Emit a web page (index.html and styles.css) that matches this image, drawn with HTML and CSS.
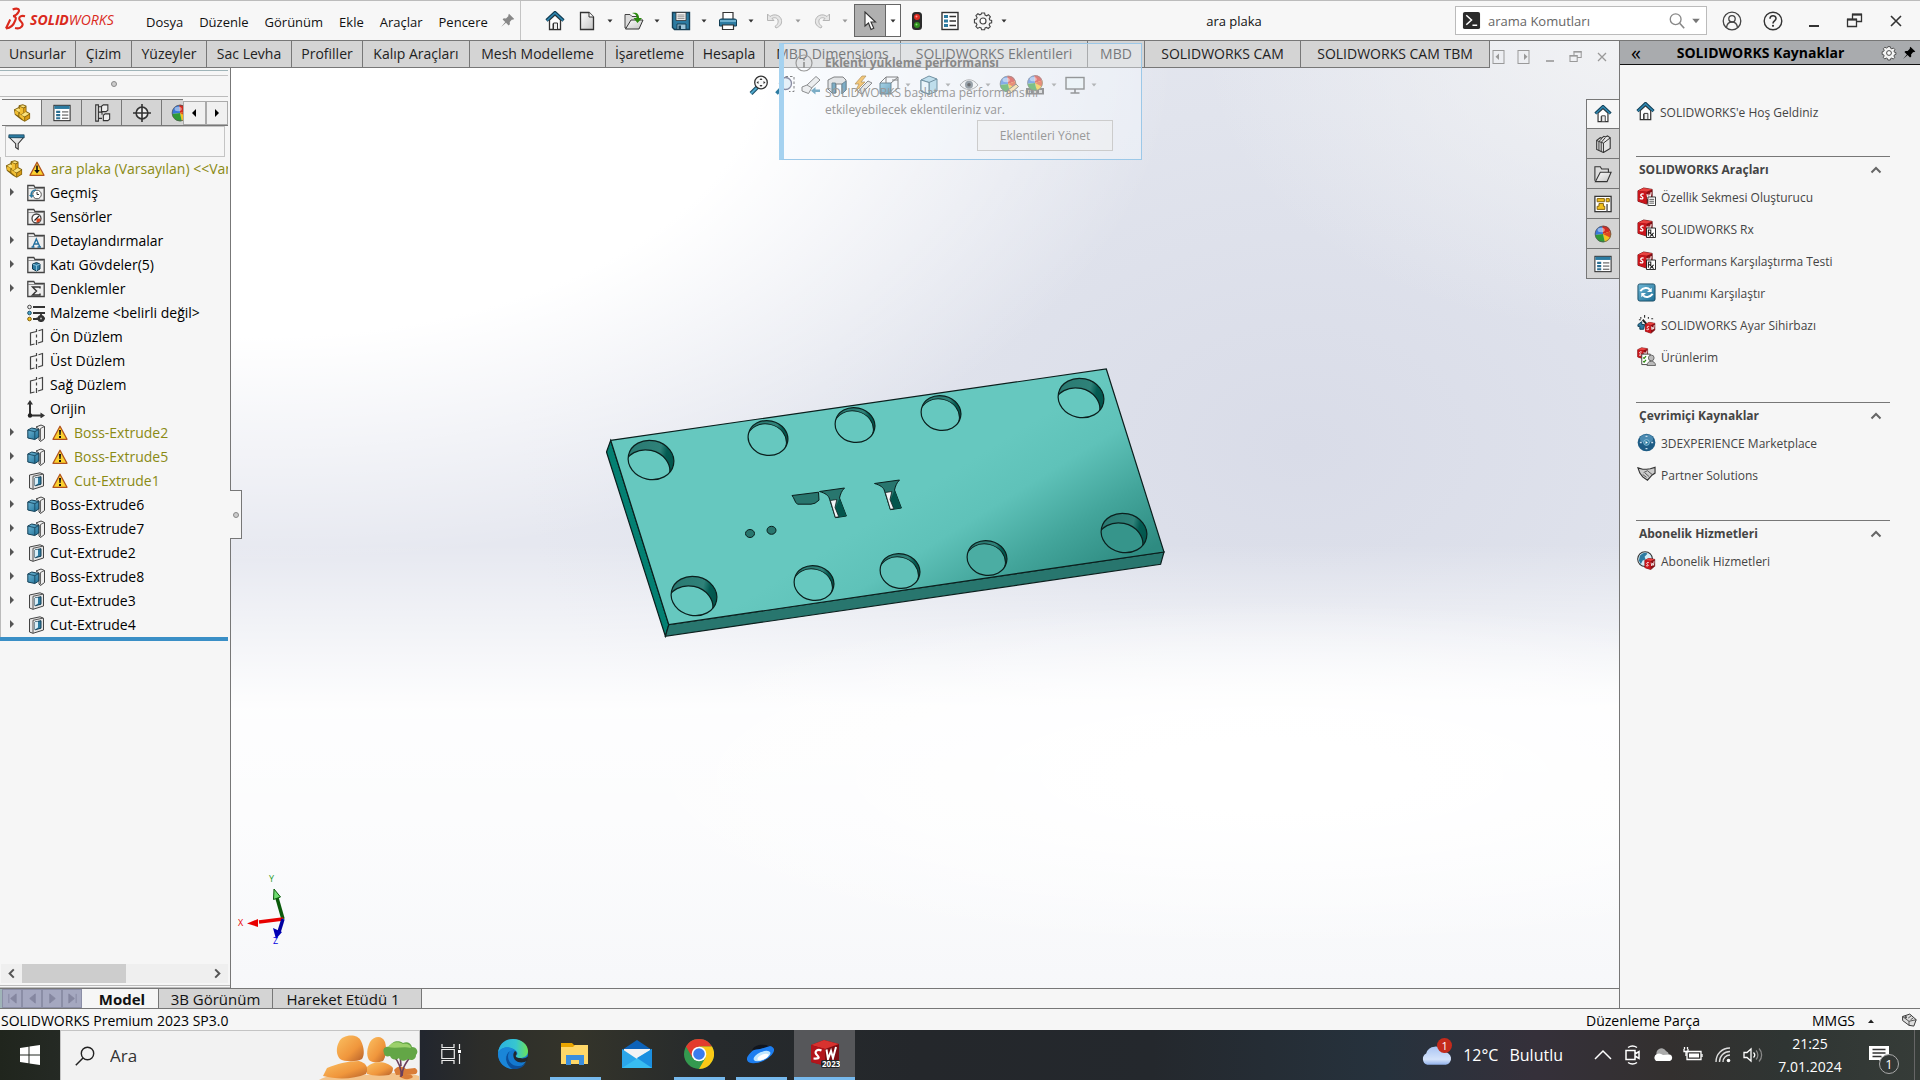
FILE: index.html
```html
<!DOCTYPE html>
<html lang="tr">
<head>
<meta charset="utf-8">
<title>ara plaka - SOLIDWORKS</title>
<link rel="stylesheet" href="styles.css">
</head>
<body>
<svg class="sprite" aria-hidden="true">
  <defs>
    <linearGradient id="gBlue" x1="0" y1="0" x2="1" y2="1"><stop offset="0" stop-color="#6fb7d6"/><stop offset="1" stop-color="#1d6f96"/></linearGradient>
    <linearGradient id="gGrey" x1="0" y1="0" x2="1" y2="1"><stop offset="0" stop-color="#fff"/><stop offset="1" stop-color="#c4c4c4"/></linearGradient>
    <linearGradient id="gFace" gradientUnits="userSpaceOnUse" x1="400" y1="70" x2="490" y2="215"><stop offset="0" stop-color="#66c8bf"/><stop offset=".3" stop-color="#5fc2b9"/><stop offset=".65" stop-color="#43a59b"/><stop offset="1" stop-color="#2e8b81"/></linearGradient>
    <linearGradient id="gHole" x1="0" y1="0" x2="1" y2="0"><stop offset="0" stop-color="#2a7a72"/><stop offset=".65" stop-color="#2f8279"/><stop offset=".8" stop-color="#045c53"/><stop offset="1" stop-color="#03554c"/></linearGradient>
    <linearGradient id="gRock" x1="0" y1="0" x2="1" y2="1"><stop offset="0" stop-color="#fbc062"/><stop offset=".6" stop-color="#f0963c"/><stop offset="1" stop-color="#b5602a"/></linearGradient>
    <linearGradient id="gEdge" x1="0" y1="0" x2="1" y2="0"><stop offset="0" stop-color="#2bb1e0"/><stop offset=".6" stop-color="#37c6d0"/><stop offset="1" stop-color="#6be358"/></linearGradient>
    <linearGradient id="gCloud" x1="0" y1="0" x2="0" y2="1"><stop offset="0" stop-color="#a9c4f3"/><stop offset=".7" stop-color="#d5e3fb"/><stop offset="1" stop-color="#8fb0ea"/></linearGradient>
  </defs>
  <symbol id="i-home" viewBox="0 0 20 20"><path d="M4.500 9v9.500h11V9L10 4z" fill="#fff" stroke="#333" stroke-width="1.300"/><path d="M8.500 18v-6h4v6M8 18v-5.500" fill="#eee" stroke="#333"/><path d="M1.500 9.500L10 1.500l8.500 8" fill="none" stroke="#123e55" stroke-width="3.200"/><path d="M2 9.500L10 2l8 7.500" fill="none" stroke="#2f87b0" stroke-width="1.600"/></symbol>
  <symbol id="i-new" viewBox="0 0 20 20"><path d="M3.500 1.500H12L16.500 6v12.500h-13z" fill="url(#gGrey)" stroke="#333" stroke-width="1.300"/><path d="M12 1.500V6h4.500" fill="#fff" stroke="#333"/></symbol>
  <symbol id="i-open" viewBox="0 0 20 20"><path d="M1 17V3.500h5l2 2h6V17z" fill="#ddd" stroke="#444"/><path d="M1.500 18L7 9h12l-4 9z" fill="url(#gGrey)" stroke="#333"/><path d="M8 2c5-1 7 1 7 5h3l-4.500 5L9.500 7h3c0-3-1-4-4.500-5z" fill="#2b8a0e"/></symbol>
  <symbol id="i-save" viewBox="0 0 20 20"><path d="M1.500 1.500h17v17h-15l-2-2z" fill="#2c7ba1" stroke="#173f55" stroke-width="1.400"/><path d="M5 1.500h10v8H5z" fill="#f4f4f4" stroke="#333" stroke-width=".8"/><path d="M6.500 4h7M6.500 5.800h7M6.500 7.600h7" stroke="#777" stroke-width=".8"/><path d="M6 13h9v5.500H6z" fill="#9cc4d8" stroke="#173f55"/><path d="M7.500 14.500h2.500v4H7.500z" fill="#173f55"/></symbol>
  <symbol id="i-print" viewBox="0 0 20 20"><path d="M5 1.500h10V9H5z" fill="#fff" stroke="#333" stroke-width="1.200"/><path d="M1.500 9l1-1h15l1 1v6h-17z" fill="#2c7ba1" stroke="#123e55"/><path d="M2 10h16" stroke="#8cc6e0" stroke-width="1.400"/><path d="M4.500 14h11v4.500h-11z" fill="#fff" stroke="#333" stroke-width="1.200"/></symbol>
  <symbol id="i-undo" viewBox="0 0 20 20"><path d="M2.500 3v6.500h6.500L7 7.500c3-2 7 0 6 4-.3 1.500-1.500 3-3 4l1 1.500c4-1.500 6-4 5.500-7.500C16 4.500 9.500 2 5 5.500z" fill="#e6e6e6" stroke="#b5b5b5"/></symbol>
  <symbol id="i-redo" viewBox="0 0 20 20"><path d="M17.500 3v6.500H11l2-2c-3-2-7 0-6 4 .3 1.500 1.500 3 3 4l-1 1.500c-4-1.500-6-4-5.500-7.500C4 4.500 10.500 2 15 5.500z" fill="#e6e6e6" stroke="#b5b5b5"/></symbol>
  <symbol id="i-cursor" viewBox="0 0 20 20"><path d="M5 1v14l3.500-3 2.500 6.500 2.800-1.200L11 11h4.500z" fill="#fff" stroke="#333" stroke-width="1.100"/></symbol>
  <symbol id="i-traffic" viewBox="0 0 20 20"><rect x="5" y="1" width="10" height="18" rx="3.500" fill="#2b2b2b"/><circle cx="10" cy="6" r="3" fill="#e02b20"/><circle cx="10" cy="14" r="3" fill="#2f8f1d"/><circle cx="9.500" cy="5.400" r="1" fill="#ff9a90"/><circle cx="9.500" cy="13.400" r="1" fill="#8fdc7c"/></symbol>
  <symbol id="i-list" viewBox="0 0 20 20"><rect x="2" y="1.500" width="16" height="17" fill="#fff" stroke="#333" stroke-width="1.400"/><path d="M4 4h4v3H4zM4 8.500h4v3H4zM4 13h4v3H4z" fill="#2c7ba1"/><path d="M9.500 5.500H16M9.500 10H16M9.500 14.500H16" stroke="#333" stroke-width="1.300"/></symbol>
  <symbol id="i-gear" viewBox="0 0 20 20"><path d="M8.400 2h3.200l.5 2.200 1.700.8 2-1.200 2 2.200-1.200 2 .6 1.500 2 .5v2.400l-2 .6-.7 1.600 1.200 2-2.200 2-1.900-1.200-1.500.6-.5 2H8.400l-.6-2-1.600-.7-2 1.200-2-2.100 1.200-1.900-.7-1.600-2-.5V8.900l2.100-.6.700-1.500-1.200-2 2.100-2 2 1.100 1.400-.6z" fill="#f4f4f4" stroke="#444" stroke-width="1.200" transform="translate(.8 .2) scale(.93)"/><circle cx="10" cy="10" r="3" fill="#fff" stroke="#444" stroke-width="1.200"/></symbol>
  <symbol id="i-pin" viewBox="0 0 20 20"><path d="M12 1l7 7-2 1-1-.3-3 3.300.2 3-1.700 1.500L8 13l-6.500 5.500L7 12 3.500 8.500 5 7l3 .2L11.300 4 11 3z" fill="currentColor"/></symbol>
  <symbol id="i-search" viewBox="0 0 20 20"><circle cx="8.500" cy="8" r="6" fill="none" stroke="currentColor" stroke-width="1.500"/><path d="M13 12.500l5 5.500" stroke="currentColor" stroke-width="1.800"/></symbol>
  <symbol id="i-prompt" viewBox="0 0 20 20"><rect x="1" y="1" width="18" height="18" rx="2" fill="#2b2b2b"/><path d="M4.500 4.500L10 9.500l-5.500 5M11 15h5" fill="none" stroke="#fff" stroke-width="1.600"/></symbol>
  <symbol id="i-user" viewBox="0 0 20 20"><circle cx="10" cy="10" r="8.800" fill="none" stroke="#444" stroke-width="1.300"/><circle cx="10" cy="7.800" r="3.200" fill="none" stroke="#444" stroke-width="1.300"/><path d="M4.500 16.500c.5-4 2.500-5.500 5.500-5.500s5 1.500 5.500 5.500" fill="none" stroke="#444" stroke-width="1.300"/></symbol>
  <symbol id="i-help" viewBox="0 0 20 20"><circle cx="10" cy="10" r="8.800" fill="none" stroke="#333" stroke-width="1.400"/><path d="M7 7.800c0-4 6-4 6-.3 0 2.300-3 2.500-3 5" fill="none" stroke="#333" stroke-width="1.600"/><circle cx="10" cy="14.800" r="1.100" fill="#333"/></symbol>
  <symbol id="i-min" viewBox="0 0 20 20"><path d="M5 15h10" stroke="currentColor" stroke-width="2"/></symbol>
  <symbol id="i-restore" viewBox="0 0 20 20"><path d="M2.500 8.500h9v7h-9zM7.500 8V3.500h9v7H12" fill="none" stroke="currentColor" stroke-width="1.300"/><path d="M2 8.500h10M7 3.500h10" stroke="currentColor" stroke-width="2"/></symbol>
  <symbol id="i-close" viewBox="0 0 20 20"><path d="M5 5l10 10M15 5L5 15" stroke="currentColor" stroke-width="1.600"/></symbol>
  <symbol id="i-paneL" viewBox="0 0 16 16"><rect x="3" y="1.500" width="11" height="13" fill="none" stroke="currentColor"/><path d="M9 4.500v6.500L5.500 7.800z" fill="currentColor"/></symbol>
  <symbol id="i-paneR" viewBox="0 0 16 16"><rect x="2" y="1.500" width="11" height="13" fill="none" stroke="currentColor"/><path d="M8 4.500v6.500l3.500-3.200z" fill="currentColor"/></symbol>
  <symbol id="i-part" viewBox="0 0 20 20"><path d="M1 6l5-2.500.500-2L11 .3 15 2v6l4 2.200V16l-6 3.700-4-2.200-7-5.500z" fill="#80600c"/><path d="M2 7l4 2v4L2.500 11z" fill="#f2bf33"/><path d="M2.500 6.500L6 4.800l2 1V9L6 8.500z" fill="#fbe27c"/><path d="M7.500 3l4 1.600V10L9 11.500l-1.500-1z" fill="#f2bf33"/><path d="M7.500 2.300L11 1.300l3 1.200-2.500 1.300z" fill="#fbe27c"/><path d="M12 4.600l2.200-1.100v5L12 10z" fill="#d99b16"/><path d="M9 12.200L14 9l4 1.800-5 3.200z" fill="#fbe27c"/><path d="M7 10.500l5.500 4.200v3.800L7 14z" fill="#f2bf33"/><path d="M13.500 14.800l4.700-3v3.700l-4.700 3z" fill="#d99b16"/></symbol>
  <symbol id="i-props" viewBox="0 0 20 20"><rect x="1" y="1.500" width="18" height="17" fill="#fff" stroke="#333" stroke-width="1.200"/><path d="M1.500 2h17v3.500h-17z" fill="#2c7ba1"/><path d="M3.500 7.500H8V10H3.500zM3.500 11.200H8v2.300H3.500zM3.500 14.700H8V17H3.500z" fill="#2c6f92"/><path d="M10 8.800h7M10 12.300h7M10 15.800h7" stroke="#333"/></symbol>
  <symbol id="i-config" viewBox="0 0 20 20"><path d="M3 1h3v18H3zM6 3h4M6 9h4v3M6 16h4" fill="#ddd" stroke="#333" stroke-width="1.200"/><path d="M9.500 2.500l2-1.500h5v6l-2 1.500h-5zM11.500 12.500l2-1.500h5v6l-2 1.500h-5z" fill="#eee" stroke="#333" stroke-width="1.200"/></symbol>
  <symbol id="i-target" viewBox="0 0 20 20"><circle cx="10" cy="10" r="6.500" fill="#eee" stroke="#333" stroke-width="1.800"/><path d="M10 0v20M0 10h20" stroke="#333" stroke-width="1.800"/></symbol>
  <symbol id="i-ball" viewBox="0 0 20 20"><path d="M10 10L9 1a9 9 0 0 1 9.500 6z" fill="#d32a20"/><path d="M10 10l8.500-3A9 9 0 0 1 12 18.900z" fill="#f3c11d"/><path d="M9 1.100A9 9 0 0 0 1.100 11L10 10z" fill="#3a78d8"/><path d="M1.100 11A9 9 0 0 0 12 18.900L10 10z" fill="#2f9a36"/><path d="M10 10l8.500-3 .3 3-1 4z" fill="#e04822"/><circle cx="10" cy="10" r="8.800" fill="none" stroke="#555" stroke-width=".8"/><ellipse cx="8" cy="5.500" rx="4" ry="2.500" fill="#fff" opacity=".45"/></symbol>
  <symbol id="i-filter" viewBox="0 0 20 20"><path d="M1.500 4.500h17L12 12v6.500l-3-2V12z" fill="url(#gGrey)" stroke="#333" stroke-width="1.200"/><path d="M1 1.500h18V5H1z" fill="#2c7ba1" stroke="#123e55" stroke-width=".8"/></symbol>
  <symbol id="i-warn" viewBox="0 0 16 16"><path d="M8 1.200L15 14.300H1z" fill="#fbd22f" stroke="#b0521d" stroke-width="1.300" stroke-linejoin="round"/><path d="M7 5h2l-.4 5H7.400zM7 11h2v2H7z" fill="#111"/></symbol>
  <symbol id="i-warnd" viewBox="0 0 16 16"><path d="M8 1.200L15 14.300H1z" fill="#fbd22f" stroke="#b0521d" stroke-width="1.300" stroke-linejoin="round"/><path d="M7.200 4.500h1.600v4.500h2L8 12.500 5.200 9h2z" fill="#111"/></symbol>
  <symbol id="i-folder" viewBox="0 0 18 18"><path d="M.8 16.500V1.500h6l1.200 2h9.200v13z" fill="#eee" stroke="#444" stroke-width="1.300"/><path d="M1 4.500h16" stroke="#777" stroke-width=".8"/></symbol>
  <symbol id="i-history" viewBox="0 0 18 18"><use href="#i-folder"/><circle cx="10" cy="10.500" r="4.300" fill="#fff" stroke="#555"/><path d="M10 8v2.500h2" fill="none" stroke="#333"/><path d="M4 12c0-4 2-6 5-6" fill="none" stroke="#2c7ba1" stroke-width="1.600"/><path d="M2 11h5l-2.500 3z" fill="#2c7ba1"/></symbol>
  <symbol id="i-sensor" viewBox="0 0 18 18"><use href="#i-folder"/><circle cx="9.500" cy="10.500" r="4.500" fill="#fff" stroke="#444" stroke-width="1.300"/><path d="M9.500 10.500h4a4 4 0 0 1-4 4z" fill="#e0441c"/><path d="M7.500 12.500L12 8" stroke="#222" stroke-width="1.300"/></symbol>
  <symbol id="i-annot" viewBox="0 0 18 18"><use href="#i-folder"/><path d="M4.500 15h3M10.500 15h3.500M6 14.500L9.300 7l3.400 7.500M7 12h4.500" fill="none" stroke="#2471a0" stroke-width="1.400"/></symbol>
  <symbol id="i-bodies" viewBox="0 0 18 18"><use href="#i-folder"/><path d="M5.500 8l4-1.500L13 8v5l-3.500 2-4-2z" fill="#2c7ba1" stroke="#103a50"/><path d="M9.500 9.500V15M5.500 8l4 1.500L13 8" fill="none" stroke="#9fd2ea" stroke-width=".8"/></symbol>
  <symbol id="i-sigma" viewBox="0 0 18 18"><use href="#i-folder"/><path d="M13 8.500V7H5.500L9.500 11l-4 4H13v-1.500" fill="none" stroke="#333" stroke-width="1.400"/></symbol>
  <symbol id="i-material" viewBox="0 0 18 18"><circle cx="2.500" cy="3" r="1.800" fill="#eee" stroke="#444"/><circle cx="2.500" cy="9" r="1.800" fill="#4fa8cc" stroke="#1b4d66"/><circle cx="2.500" cy="15" r="1.800" fill="#f3c11d" stroke="#805f0a"/><path d="M6 3h12M6 9h12M6 15h5" stroke="#333" stroke-width="1.800"/><circle cx="14" cy="14.500" r="3.500" fill="#333"/><path d="M14 10v9M9.500 14.500h9" stroke="#333" stroke-width="1.800"/><circle cx="14" cy="14.500" r="1" fill="#bbb"/></symbol>
  <symbol id="i-plane" viewBox="0 0 18 18"><path d="M9.500 3.500L3.500 5v12l4-1M11.500 2.700l4-1.200v12L11 15" fill="none" stroke="#444" stroke-width="1.200"/><path d="M9.500 1v3M9.500 6.500v3M9.500 12v5" stroke="#444" stroke-width="1.200"/></symbol>
  <symbol id="i-origin" viewBox="0 0 18 18"><path d="M3 3v12.500h12" fill="none" stroke="#333" stroke-width="2"/><path d="M0 4.500L3 0l3 4.500zM13.500 12.500l4.500 3-4.500 3z" fill="#333"/><circle cx="3" cy="15.500" r="2.200" fill="#222"/></symbol>
  <symbol id="i-boss" viewBox="0 0 18 18"><path d="M9 3l5-2 3.500 1.500v12l-4 3L12 16V5z" fill="#eee" stroke="#444"/><path d="M13.500 4.500v12M13.500 4.500l4-2" stroke="#444" fill="none" stroke-width=".8"/><path d="M.8 6l4-2 7 1.500V13l-4 2.500-7-1.500z" fill="url(#gBlue)" stroke="#123e55"/><path d="M.8 6l7 1.700L11.800 5.500M7.800 7.700v7.500" fill="none" stroke="#123e55" stroke-width=".8"/></symbol>
  <symbol id="i-cut" viewBox="0 0 18 18"><path d="M2.500 3L13 .8l3.500 1.400V14L6 17.300 2.500 16z" fill="#e6e6e6" stroke="#444"/><path d="M6 4.300v13M6 4.300l10-2.200" fill="none" stroke="#555"/><path d="M8 6l6-1.300v7.500L8 13.800z" fill="#2c7ba1" stroke="#123e55"/><path d="M8 6l3-.6v6L8 13.500z" fill="#d9eef7"/></symbol>
  <symbol id="i-lib" viewBox="0 0 20 20"><path d="M3 6l4-3 1.500.6L11 1.500l1.500.6L15 1l3 2v12l-7.500 4.500L3 16z" fill="#e4e4e4" stroke="#333" stroke-width="1.200"/><path d="M3 6l2.500 1.200 3.500-3.500M5.500 7.200V17M8 8.200L12.500 3M8 8.200V18M10.500 9v10M10.500 9L18 3.200M5.500 7.200l5 1.800" fill="none" stroke="#333" stroke-width="1.100"/></symbol>
  <symbol id="i-dir" viewBox="0 0 20 20"><path d="M1 17.500V2h6l1.500 2.500H16v5" fill="#ddd" stroke="#333" stroke-width="1.200"/><path d="M1.500 18.500L7 8h12l-4.500 10.500z" fill="url(#gGrey)" stroke="#333" stroke-width="1.200"/></symbol>
  <symbol id="i-palette" viewBox="0 0 20 20"><rect x="1" y="1.500" width="18" height="17" fill="#fff" stroke="#333" stroke-width="1.400"/><path d="M3.500 4h8v3.500h-8zM13.500 4H17v3.500h-3.500zM5.500 9.500h5v3H12V16H3.500v-3.500h2z" fill="#f3c11d" stroke="#7d5a06"/><path d="M14.500 10v8" stroke="#777" stroke-width="2"/></symbol>
  <symbol id="i-zfit" viewBox="0 0 20 20"><path d="M8.500 12L2 18.500" stroke="#1b4d66" stroke-width="4"/><path d="M8.500 12L2 18.500" stroke="#4fa8cc" stroke-width="2"/><circle cx="12" cy="7.500" r="6.300" fill="#fafafa" stroke="#333" stroke-width="1.300"/><path d="M12 3l1.500 2h-3zM12 12l1.500-2h-3zM7.500 7.500l2-1.500v3zM16.500 7.500l-2-1.500v3z" fill="#333"/></symbol>
  <symbol id="i-zarea" viewBox="0 0 20 20"><path d="M5 5V1.500h14v15h-5" fill="none" stroke="#333" stroke-dasharray="2.500 2"/><path d="M6.500 13L1.500 18.500" stroke="#2c7ba1" stroke-width="3.500"/><circle cx="10.500" cy="8.500" r="6" fill="#dbeaf3" stroke="#446" stroke-width="1.300"/></symbol>
  <symbol id="i-prev" viewBox="0 0 20 20"><path d="M1 12l5-2 9-8.500L19 5l-8 7.500-3.500 6L1 16z" fill="#e6e6e6" stroke="#444"/><path d="M6 10l5 3" stroke="#555"/><path d="M19 14.500h-4.500V12L10 15.700l4.500 3.800V17H19z" fill="#2c7ba1"/></symbol>
  <symbol id="i-section" viewBox="0 0 20 20"><path d="M1 5l6-3h9l3 3v10l-4 4V9H9v9H5l-4-4z" fill="#d5d5d5" stroke="#333"/><path d="M5 8h3.500v10H5zM15 9l4-3v9l-4 4z" fill="#2c7ba1" stroke="#123e55"/></symbol>
  <symbol id="i-dyn" viewBox="0 0 20 20"><path d="M5 17l4-5 6-6 4 2-7 7-3 4z" fill="#ddd" stroke="#444"/><path d="M9 1L2 9h4l-4 8 10-10H8l5-6z" fill="#f3a51d" stroke="#8d5a06" stroke-width=".8"/></symbol>
  <symbol id="i-orient" viewBox="0 0 20 20"><path d="M1 8h11v11H1z" fill="url(#gBlue)" stroke="#123e55"/><path d="M1 8l6-6h12v11l-7 6M12 8l7-6M7 2v6M13 5h6" fill="none" stroke="#333"/></symbol>
  <symbol id="i-style" viewBox="0 0 20 20"><path d="M2 5l8-4 8 3v12l-8 3.500-8-3z" fill="#9ccbe0" stroke="#1b4d66"/><path d="M10 7.500V19M2 5l8 2.500L18 4" fill="none" stroke="#1b4d66"/><path d="M2 5l8 2.500V19l-8-3z" fill="#e3f1f8" stroke="#1b4d66"/></symbol>
  <symbol id="i-eye" viewBox="0 0 20 20"><path d="M1 10c5-7 13-7 18 0-5 6-13 6-18 0z" fill="#eee" stroke="#888"/><circle cx="10" cy="9.800" r="4" fill="#5b6770"/><circle cx="10" cy="9.800" r="1.800" fill="#111"/></symbol>
  <symbol id="i-appear" viewBox="0 0 20 20"><g transform="scale(.9)"><use href="#i-ball" width="20" height="20"/></g><path d="M8 19l1-4 8-6 2.500 2.500L12 18z" fill="#f5d28a" stroke="#555"/></symbol>
  <symbol id="i-scene" viewBox="0 0 20 20"><path d="M1 13h18v6.500H1z" fill="#555"/><path d="M3 15h3v3H3zM8.500 15h3v3h-3zM14 15h3v3h-3z" fill="#ccc"/><g transform="translate(1.500 -.5) scale(.85)"><use href="#i-ball" width="20" height="20"/></g></symbol>
  <symbol id="i-monitor" viewBox="0 0 20 20"><rect x="1" y="2.500" width="18" height="11.500" fill="#e7eef2" stroke="#555" stroke-width="1.400"/><path d="M10 14v4M5.500 18h9" stroke="#555" stroke-width="1.600"/></symbol>
  <symbol id="i-sw" viewBox="0 0 20 20"><path d="M1 4l6-3 9 1.500V13l-6 5-9-3z" fill="#8e0e14" stroke="#5b0a0e" stroke-width=".8"/><path d="M1 4l6-3 9 1.500L10 5z" fill="#e8413f"/><path d="M1 4l9 1v12.800L1 15z" fill="#c9161c"/><path d="M7 7.500c-3-1-4 1.500-2 2.500s1.500 3.500-2 2" fill="none" stroke="#fff" stroke-width="1.400"/><path d="M10.500 7.500l1 5 1.200-4 1.200 3 1-6" fill="none" stroke="#fff" stroke-width="1.200"/></symbol>
  <symbol id="i-swdoc" viewBox="0 0 20 20"><use href="#i-sw" width="20" height="20"/><path d="M11.500 10.500h8v9h-8z" fill="#fff" stroke="#333"/><path d="M13 13h5M13 15h5M13 17h5" stroke="#555"/></symbol>
  <symbol id="i-swrx" viewBox="0 0 20 20"><use href="#i-sw" width="20" height="20"/><path d="M10 9.500h9.500v10H10z" fill="#fff" stroke="#222"/><path d="M12 17.500v-6h2.500v3H12M13.500 14.500l4 4M17.500 14.500l-4 4" fill="none" stroke="#222" stroke-width="1.100"/></symbol>
  <symbol id="i-score" viewBox="0 0 20 20"><rect x="1" y="1" width="18" height="18" rx="2" fill="url(#gBlue)" stroke="#1b4d66"/><path d="M3.500 8.500c3-4 8-4 10-1.500M16.500 11.500c-3 4-8 4-10 1.500" fill="none" stroke="#fff" stroke-width="2"/><path d="M15.500 5v4.500h-5zM4.500 15v-4.500h5z" fill="#fff"/></symbol>
  <symbol id="i-wizard" viewBox="0 0 20 20"><path d="M1 10l4-3v3h3l-1 5H3v-3H1z" fill="#2c7ba1" stroke="#123e55"/><path d="M6 5l8 9" stroke="#222" stroke-width="2"/><path d="M4 2v2M8 0v3M12 2v2M15 4h2M2 5h2" stroke="#333" stroke-width="1.200"/><g transform="translate(8 7) scale(.68)"><use href="#i-sw" width="20" height="20"/></g></symbol>
  <symbol id="i-products" viewBox="0 0 20 20"><g transform="scale(.7)"><use href="#i-sw" width="20" height="20"/></g><path d="M5 7.500h9v11H5z" fill="#fff" stroke="#444"/><path d="M6.500 11l1 1 2-2.500M6.500 15l1 1 2-2.500" fill="none" stroke="#2b8a0e" stroke-width="1.300"/><circle cx="15" cy="11.500" r="3" fill="#bbb" stroke="#666"/><path d="M10.500 19.500c0-6 9-6 9 0z" fill="#bbb" stroke="#666"/></symbol>
  <symbol id="i-compass" viewBox="0 0 20 20"><circle cx="10" cy="10" r="9.300" fill="#1d5c85"/><ellipse cx="10" cy="6" rx="7" ry="4.500" fill="#6fb1d6" opacity=".55"/><circle cx="10" cy="10" r="3" fill="#2c7ba1" stroke="#9fd2ea" stroke-width=".8"/><path d="M9 8.500l2.500 1.500L9 11.500z" fill="#fff"/><path d="M9 3.500h2M3 10h2M15 10h2M9 16.500h2" stroke="#cde" stroke-width="1.400"/></symbol>
  <symbol id="i-hands" viewBox="0 0 20 20"><path d="M1 3l5 1.500h4L14 4l5-1.500v6l-3 2-5 5.500-5-3.500L3 8.500z" fill="#ccc" stroke="#333" stroke-width="1.200"/><path d="M7 8l4-2 5 4M6 10l4 3M8.500 8.500l4 3.500" fill="none" stroke="#555"/></symbol>
  <symbol id="i-globe" viewBox="0 0 20 20"><circle cx="8.500" cy="8.500" r="7.800" fill="#d5edf7" stroke="#333" stroke-width="1.100"/><path d="M3 5c3-3 6-4 8-2l-3 3 1 3-3 1-2 4-2-4z" fill="#2c7ba1"/><g transform="translate(7.500 7) scale(.7)"><use href="#i-sw" width="20" height="20"/></g></symbol>
  <symbol id="i-up" viewBox="0 0 12 12"><path d="M1.500 8.500L6 4l4.500 4.500" fill="none" stroke="#666" stroke-width="2"/></symbol>
  <symbol id="i-caret" viewBox="0 0 8 8"><path d="M1.500 2.500h5L4 5.500z" fill="currentColor"/></symbol>
  <symbol id="i-tri" viewBox="0 0 8 8"><path d="M2 0v8l4-4z" fill="currentColor"/></symbol>
  <symbol id="i-tril" viewBox="0 0 8 8"><path d="M6 0v8L2 4z" fill="currentColor"/></symbol>
  <symbol id="i-chl" viewBox="0 0 12 12"><path d="M8.500 1.500L4 6l4.500 4.500" fill="none" stroke="#555" stroke-width="2.200"/></symbol>
  <symbol id="i-chr" viewBox="0 0 12 12"><path d="M3.500 1.500L8 6l-4.500 4.500" fill="none" stroke="#555" stroke-width="2.200"/></symbol>
  <symbol id="hole-l" viewBox="-25 -22 50 44" overflow="visible"><clipPath id="cl"><ellipse rx="23" ry="19.500" transform="rotate(12)"/></clipPath><ellipse rx="23" ry="19.500" transform="rotate(12)" fill="url(#gHole)"/><g clip-path="url(#cl)"><ellipse cx="-4" cy="9.500" rx="23" ry="19.500" transform="rotate(12 -4 9.500)" fill="var(--floor)" stroke="#0b1f1d" stroke-width="1.200"/></g><ellipse rx="23" ry="19.500" transform="rotate(12)" fill="none" stroke="#0b1f1d" stroke-width="1.200"/></symbol>
  <symbol id="hole-s" viewBox="-25 -22 50 44" overflow="visible"><clipPath id="cs"><ellipse rx="20" ry="17.300" transform="rotate(12)"/></clipPath><ellipse rx="20" ry="17.300" transform="rotate(12)" fill="url(#gHole)"/><g clip-path="url(#cs)"><ellipse cx="-1.500" cy="3.300" rx="20" ry="17.300" transform="rotate(12 -1.500 3.300)" fill="var(--floor)" stroke="#0b1f1d"/></g><ellipse rx="20" ry="17.300" transform="rotate(12)" fill="none" stroke="#0b1f1d" stroke-width="1.200"/></symbol>
</svg>

<header class="titlebar">
  <div class="brand">
    <svg class="brand-mark" viewBox="0 0 22 26"><path d="M8 2.500c5-2 8-.5 6 3-1 2-3 3.500-5.500 4 3 .3 3.500 2 2 5C9 19 5 22 1 22.500M1 22.500L5.500 13M21 9.500c-4-1-6.500.5-6 3s3.500 3 3.500 6c-.5 3-4 4.500-8 3.500" fill="none" stroke="#da291c" stroke-width="2.200"/></svg>
    <span class="brand-name"><b>SOLID</b>WORKS</span>
  </div>
  <nav class="menus" aria-label="Menü">
    <button>Dosya</button><button>Düzenle</button><button>Görünüm</button><button>Ekle</button><button>Araçlar</button><button>Pencere</button>
    <button class="pin" aria-label="Sabitle"><svg><use href="#i-pin"/></svg></button>
  </nav>
  <div class="quick">
    <button class="ico home" aria-label="Giriş"><svg><use href="#i-home"/></svg></button>
    <div class="splits">
      <span class="split"><button class="ico" aria-label="Yeni"><svg><use href="#i-new"/></svg></button><button class="caret" aria-label="Yeni seçenekleri"><svg><use href="#i-caret"/></svg></button></span>
      <span class="split"><button class="ico" aria-label="Aç"><svg><use href="#i-open"/></svg></button><button class="caret" aria-label="Aç seçenekleri"><svg><use href="#i-caret"/></svg></button></span>
      <span class="split"><button class="ico" aria-label="Kaydet"><svg><use href="#i-save"/></svg></button><button class="caret" aria-label="Kaydet seçenekleri"><svg><use href="#i-caret"/></svg></button></span>
      <span class="split"><button class="ico" aria-label="Yazdır"><svg><use href="#i-print"/></svg></button><button class="caret" aria-label="Yazdır seçenekleri"><svg><use href="#i-caret"/></svg></button></span>
      <span class="split dim"><button class="ico" aria-label="Geri al"><svg><use href="#i-undo"/></svg></button><button class="caret" aria-label="Geri al listesi"><svg><use href="#i-caret"/></svg></button></span>
      <span class="split dim"><button class="ico" aria-label="Yinele"><svg><use href="#i-redo"/></svg></button><button class="caret" aria-label="Yinele listesi"><svg><use href="#i-caret"/></svg></button></span>
    </div>
    <span class="select-tool"><button class="ico" aria-label="Seç"><svg><use href="#i-cursor"/></svg></button><button class="caret" aria-label="Seçim seçenekleri"><svg><use href="#i-caret"/></svg></button></span>
    <div class="tools">
      <button class="ico" aria-label="Yeniden oluştur"><svg><use href="#i-traffic"/></svg></button>
      <button class="ico" aria-label="Dosya özellikleri"><svg><use href="#i-list"/></svg></button>
      <span class="split"><button class="ico" aria-label="Seçenekler"><svg><use href="#i-gear"/></svg></button><button class="caret" aria-label="Diğer seçenekler"><svg><use href="#i-caret"/></svg></button></span>
    </div>
  </div>
  <h1 class="doc-title">ara plaka</h1>
  <div class="command-search">
    <svg class="prompt"><use href="#i-prompt"/></svg>
    <input type="text" aria-label="arama Komutları" placeholder="arama Komutları">
    <svg class="mag"><use href="#i-search"/></svg><svg class="drop"><use href="#i-caret"/></svg>
  </div>
  <div class="window-controls">
    <button aria-label="Oturum"><svg><use href="#i-user"/></svg></button>
    <button aria-label="Yardım"><svg><use href="#i-help"/></svg></button>
    <button aria-label="Simge durumuna küçült"><svg><use href="#i-min"/></svg></button>
    <button aria-label="Geri yükle"><svg><use href="#i-restore"/></svg></button>
    <button aria-label="Kapat"><svg><use href="#i-close"/></svg></button>
  </div>
</header>

<main class="workspace">
  <div class="document">
    <div class="ribbon">
      <div class="ribbon-tabs">
        <button>Unsurlar</button><button>Çizim</button><button>Yüzeyler</button><button>Sac Levha</button><button>Profiller</button><button>Kalıp Araçları</button><button>Mesh Modelleme</button><button>İşaretleme</button><button>Hesapla</button><button>MBD Dimensions</button><button>SOLIDWORKS Eklentileri</button><button>MBD</button><button>SOLIDWORKS CAM</button><button>SOLIDWORKS CAM TBM</button>
      </div>
      <div class="doc-controls">
        <button aria-label="Sol bölme"><svg><use href="#i-paneL"/></svg></button>
        <button aria-label="Sağ bölme"><svg><use href="#i-paneR"/></svg></button>
        <button aria-label="Belgeyi küçült"><svg><use href="#i-min"/></svg></button>
        <button aria-label="Belgeyi geri yükle"><svg><use href="#i-restore"/></svg></button>
        <button aria-label="Belgeyi kapat"><svg><use href="#i-close"/></svg></button>
      </div>
    </div>
    <div class="doc-body">
      <aside class="manager">
        <div class="grip"><i></i></div>
        <div class="manager-tabs">
          <button class="on" aria-label="Tasarım ağacı"><svg><use href="#i-part"/></svg></button>
          <button aria-label="Özellikler"><svg><use href="#i-props"/></svg></button>
          <button aria-label="Konfigürasyonlar"><svg><use href="#i-config"/></svg></button>
          <button aria-label="DimXpert"><svg><use href="#i-target"/></svg></button>
          <button class="cropped" aria-label="Görüntü"><svg><use href="#i-ball"/></svg></button>
          <button class="step" aria-label="Sola kaydır"><svg><use href="#i-tril"/></svg></button>
          <button class="step" aria-label="Sağa kaydır"><svg><use href="#i-tri"/></svg></button>
        </div>
        <div class="filter"><button aria-label="Filtrele"><svg><use href="#i-filter"/></svg></button></div>
        <ul class="tree">
          <li class="root olive"><svg class="t"><use href="#i-part"/></svg><svg class="w"><use href="#i-warnd"/></svg><span>ara plaka (Varsayılan) &lt;&lt;Varsayılan&gt;</span></li>
          <li class="has"><svg class="t"><use href="#i-history"/></svg><span>Geçmiş</span></li>
          <li><svg class="t"><use href="#i-sensor"/></svg><span>Sensörler</span></li>
          <li class="has"><svg class="t"><use href="#i-annot"/></svg><span>Detaylandırmalar</span></li>
          <li class="has"><svg class="t"><use href="#i-bodies"/></svg><span>Katı Gövdeler(5)</span></li>
          <li class="has"><svg class="t"><use href="#i-sigma"/></svg><span>Denklemler</span></li>
          <li><svg class="t"><use href="#i-material"/></svg><span>Malzeme &lt;belirli değil&gt;</span></li>
          <li><svg class="t"><use href="#i-plane"/></svg><span>Ön Düzlem</span></li>
          <li><svg class="t"><use href="#i-plane"/></svg><span>Üst Düzlem</span></li>
          <li><svg class="t"><use href="#i-plane"/></svg><span>Sağ Düzlem</span></li>
          <li><svg class="t"><use href="#i-origin"/></svg><span>Orijin</span></li>
          <li class="has olive"><svg class="t"><use href="#i-boss"/></svg><svg class="w"><use href="#i-warn"/></svg><span>Boss-Extrude2</span></li>
          <li class="has olive"><svg class="t"><use href="#i-boss"/></svg><svg class="w"><use href="#i-warn"/></svg><span>Boss-Extrude5</span></li>
          <li class="has olive"><svg class="t"><use href="#i-cut"/></svg><svg class="w"><use href="#i-warn"/></svg><span>Cut-Extrude1</span></li>
          <li class="has"><svg class="t"><use href="#i-boss"/></svg><span>Boss-Extrude6</span></li>
          <li class="has"><svg class="t"><use href="#i-boss"/></svg><span>Boss-Extrude7</span></li>
          <li class="has"><svg class="t"><use href="#i-cut"/></svg><span>Cut-Extrude2</span></li>
          <li class="has"><svg class="t"><use href="#i-boss"/></svg><span>Boss-Extrude8</span></li>
          <li class="has"><svg class="t"><use href="#i-cut"/></svg><span>Cut-Extrude3</span></li>
          <li class="has"><svg class="t"><use href="#i-cut"/></svg><span>Cut-Extrude4</span></li>
        </ul>
        <div class="rollback"></div>
        <div class="hscroll"><button aria-label="Sola"><svg><use href="#i-chl"/></svg></button><div class="track"><i></i></div><button aria-label="Sağa"><svg><use href="#i-chr"/></svg></button></div>
        <div class="base-line"></div>
        <button class="flyout" aria-label="Paneli gizle"><i></i></button>
      </aside>
      <section class="canvas" aria-label="Grafik alanı">
        <div class="hud">
          <button aria-label="Ekrana sığdır"><svg><use href="#i-zfit"/></svg></button>
          <button aria-label="Alana yakınlaş"><svg><use href="#i-zarea"/></svg></button>
          <button aria-label="Önceki görünüm"><svg><use href="#i-prev"/></svg></button>
          <button aria-label="Kesit görünümü"><svg><use href="#i-section"/></svg></button>
          <button aria-label="Dinamik görünüm"><svg><use href="#i-dyn"/></svg></button>
          <button class="more" aria-label="Görünüm yönü"><svg><use href="#i-orient"/></svg><svg class="c"><use href="#i-caret"/></svg></button>
          <button class="more" aria-label="Görüntü stili"><svg><use href="#i-style"/></svg><svg class="c"><use href="#i-caret"/></svg></button>
          <button class="more" aria-label="Gizle veya göster"><svg><use href="#i-eye"/></svg><svg class="c"><use href="#i-caret"/></svg></button>
          <button aria-label="Görünümü düzenle"><svg><use href="#i-appear"/></svg></button>
          <button class="more" aria-label="Sahne uygula"><svg><use href="#i-scene"/></svg><svg class="c"><use href="#i-caret"/></svg></button>
          <button class="more" aria-label="Görünüm ayarları"><svg><use href="#i-monitor"/></svg><svg class="c"><use href="#i-caret"/></svg></button>
        </div>
        <svg class="plate" viewBox="0 0 560 270">
          <path d="M4.700 72.300L62.800 256.700 59.400 268.300.5 84z" fill="#048072" stroke="#0b1f1d" stroke-width="1.200"/>
          <path d="M62.800 256.700L558 184 554.600 196.300 59.400 268.300z" fill="#28766e" stroke="#0b1f1d" stroke-width="1.200"/>
          <path d="M4.700 72.300L500.300 1 558 184 62.800 256.700z" fill="url(#gFace)" stroke="#0b1f1d" stroke-width="1.200"/>
          <use href="#hole-l" x="20" y="70" width="50" height="44"/>
          <use href="#hole-l" x="450" y="8" width="50" height="44"/>
          <use class="shade-d" href="#hole-l" x="493" y="143" width="50" height="44"/>
          <use href="#hole-l" x="63" y="206" width="50" height="44"/>
          <use href="#hole-s" x="137" y="48" width="50" height="44"/>
          <use href="#hole-s" x="224" y="35" width="50" height="44"/>
          <use href="#hole-s" x="310" y="23" width="50" height="44"/>
          <use href="#hole-s" x="183" y="193" width="50" height="44"/>
          <use class="shade-a" href="#hole-s" x="269" y="181" width="50" height="44"/>
          <use class="shade-b" href="#hole-s" x="356" y="168" width="50" height="44"/>
          <ellipse cx="144" cy="165.500" rx="4.500" ry="4" fill="#28766e" stroke="#0b1f1d"/><ellipse cx="165.500" cy="162.300" rx="4.500" ry="4" fill="#28766e" stroke="#0b1f1d"/>
          <path d="M186 127.500l26.500-3.300.5 8-4 3-4 1h-13.500c-3-2-3-6-5.500-8.700z" fill="#28766e" stroke="#0b1f1d"/>
          <g id="slot"><path d="M213.500 123.500l25-3.500c-3 3-4 6-5 10l6.900 18-11 1.700-5.800-18.500c-1-4-4.500-6-10.100-7.700z" fill="#28766e" stroke="#0b1f1d"/><path d="M233.500 130l6.900 18-7.500 1-3.500-9z" fill="#03554c"/><path d="M224.300 132.500l6.500-1-1.800 8 3.800 9.300-3.500.5z" fill="#f3f4f7" stroke="#0b1f1d" stroke-width=".8"/></g>
          <use href="#slot" x="55" y="-8"/>
        </svg>
        <svg class="triad" viewBox="0 0 52 78">
          <path d="M46 47l-6-21" stroke="#0a5a0a" stroke-width="3.500"/><path d="M36.500 27.500L37 17l6.500 8z" fill="#6fdc6f" stroke="#0a5a0a"/>
          <path d="M46 47L22 50" stroke="#e80000" stroke-width="3.500"/><path d="M10 51.500l11-4.500v8z" fill="#e80000"/>
          <path d="M46 47l-4 13" stroke="#0000a0" stroke-width="3.500"/><path d="M36 56l9 4-6 7z" fill="#0000b4"/>
          <text x="32" y="10" fill="#2a9a2a">Y</text><text x="1" y="54" fill="#e80000">X</text><text x="36" y="72" fill="#0000e0">Z</text>
        </svg>
        <nav class="pane-tabs" aria-label="Görev bölmesi">
          <button class="on" aria-label="Kaynaklar"><svg><use href="#i-home"/></svg></button>
          <button aria-label="Tasarım kitaplığı"><svg><use href="#i-lib"/></svg></button>
          <button aria-label="Dosya gezgini"><svg><use href="#i-dir"/></svg></button>
          <button aria-label="Görünüm paleti"><svg><use href="#i-palette"/></svg></button>
          <button aria-label="Görünümler"><svg><use href="#i-ball"/></svg></button>
          <button aria-label="Özel özellikler"><svg><use href="#i-props"/></svg></button>
        </nav>
      </section>
    </div>
    <div class="sheet-tabs">
      <div class="steppers">
        <button aria-label="İlk"><svg viewBox="0 0 12 12"><path d="M2 1v10M10 1v10L4 6z"/></svg></button><button aria-label="Önceki"><svg viewBox="0 0 12 12"><path d="M9 1v10L3 6z"/></svg></button><button aria-label="Sonraki"><svg viewBox="0 0 12 12"><path d="M3 1v10l6-5z"/></svg></button><button aria-label="Son"><svg viewBox="0 0 12 12"><path d="M10 1v10M2 1v10l6-5z"/></svg></button>
      </div>
      <button class="sheet on">Model</button><button class="sheet view">3B Görünüm</button><button class="sheet motion">Hareket Etüdü 1</button>
    </div>
  </div>

  <aside class="taskpane">
    <header><button aria-label="Daralt">«</button><h2>SOLIDWORKS Kaynaklar</h2><button aria-label="Ayarlar"><svg><use href="#i-gear"/></svg></button><button aria-label="Sabitle"><svg class="small"><use href="#i-pin"/></svg></button></header>
    <a class="welcome" href="#"><svg><use href="#i-home"/></svg>SOLIDWORKS'e Hoş Geldiniz</a>
    <section>
      <h3>SOLIDWORKS Araçları<svg><use href="#i-up"/></svg></h3>
      <a href="#"><svg><use href="#i-swdoc"/></svg>Özellik Sekmesi Oluşturucu</a>
      <a href="#"><svg><use href="#i-swrx"/></svg>SOLIDWORKS Rx</a>
      <a href="#"><svg><use href="#i-swrx"/></svg>Performans Karşılaştırma Testi</a>
      <a href="#"><svg><use href="#i-score"/></svg>Puanımı Karşılaştır</a>
      <a href="#"><svg><use href="#i-wizard"/></svg>SOLIDWORKS Ayar Sihirbazı</a>
      <a href="#"><svg><use href="#i-products"/></svg>Ürünlerim</a>
    </section>
    <section>
      <h3>Çevrimiçi Kaynaklar<svg><use href="#i-up"/></svg></h3>
      <a href="#"><svg><use href="#i-compass"/></svg>3DEXPERIENCE Marketplace</a>
      <a href="#"><svg><use href="#i-hands"/></svg>Partner Solutions</a>
    </section>
    <section>
      <h3>Abonelik Hizmetleri<svg><use href="#i-up"/></svg></h3>
      <a href="#"><svg><use href="#i-globe"/></svg>Abonelik Hizmetleri</a>
    </section>
  </aside>
</main>

<footer class="statusbar">
  <span class="product">SOLIDWORKS Premium 2023 SP3.0</span>
  <span class="mode">Düzenleme Parça</span>
  <button class="units">MMGS<svg viewBox="0 0 8 8"><path d="M1 6h6L4 2.500z" fill="#222"/></svg></button>
  <svg class="tag" viewBox="0 0 20 18"><path d="M2 4l9-3 8 7-3 8-6-1L2 9z" fill="#ddd" stroke="#333" stroke-width="1.200"/><path d="M2 4l8 6 9-2M10 10v5" fill="none" stroke="#333"/><circle cx="6" cy="5" r="1.500" fill="#555"/><path d="M9 6l4-3M12 8l3-2" stroke="#333"/></svg>
</footer>

<footer class="taskbar">
  <button class="start" aria-label="Başlat"><svg viewBox="0 0 20 20"><path d="M0 3l8.500-1.200V9.500H0zM9.500 1.600L20 0v9.500H9.500zM0 10.500h8.500v7.700L0 17zM9.500 10.500H20V20L9.500 18.400z" fill="#fff"/></svg></button>
  <div class="os-search">
    <svg class="glass" viewBox="0 0 20 20"><circle cx="12.500" cy="7.500" r="6.200" fill="none" stroke="#222" stroke-width="1.400"/><path d="M8 12L.8 19.300" stroke="#222" stroke-width="1.500"/></svg>
    <input type="text" aria-label="Ara" placeholder="Ara">
    <svg class="rocks" viewBox="0 0 100 47"><path d="M0 47c10-6 30-7 50-5 20-3 40-3 50 1v4z" fill="#f3c48c"/><path d="M4 43l4-8c10-4 20-7 32-7 8 2 10 8 7 13-12 5-28 6-43 2z" fill="url(#gRock)"/><path d="M20 9c3-8 19-9 22-1 3 6 4 14 1 18-5 3-18 3-22 0-4-4-4-12-1-17z" fill="url(#gRock)"/><path d="M51 9c4-6 12-7 15 0 2 7 1 15-2 19-5 2-11 2-14-1-3-5-2-12 1-18z" fill="url(#gRock)"/><path d="M48 34c5-6 20-7 26 1 0 4-2 6-4 7-8 1-16 1-22-1z" fill="url(#gRock)"/><path d="M75 37c4-5 9-4 12-1l9-1c3 2 3 4 1 6l-20 1zM80 43c5-3 12-3 14 1-3 3-10 3-14-1z" fill="#d97c37"/><path d="M82 44c1-8-2-15-8-22M83 43c0-8 4-13 8-19M82 33l-1-12" fill="none" stroke="#6b3f5c" stroke-width="1.600"/><path d="M65 20c-2-5 2-7 6-6 1-6 9-7 13-4 4-2 8 0 9 4 5 0 7 5 4 8 0 5-5 6-8 4-4 3-8 2-9-1-4 3-8 1-9-2-3 1-6 0-6-3z" fill="#63a646"/><path d="M69 14c3-5 10-6 15-3 4-1 8 1 8 4-7-2-15 1-23-1z" fill="#9bd06b"/></svg>
  </div>
  <div class="apps">
    <button class="view-tasks" aria-label="Görev görünümü"><svg viewBox="0 0 20 20"><path d="M1 0v3.500h12V0M1 20v-3.500h12V20M.8 5.500h12.500v9H.8zM18.500 0v5M18.500 10v10" fill="none" stroke="#eee" stroke-width="1.200"/><path d="M17 6h3v3h-3z" fill="#fff"/></svg></button>
    <button aria-label="Edge"><svg viewBox="0 0 30 30"><circle cx="15" cy="15" r="15" fill="#1479cf"/><path d="M0 14C1 5 7 0 15 0c9 0 15 6 15 12 0 5-4 7-8 7-3 0-4-1-4-2 1-1 2-2 1-4C17 9 4 5 0 14z" fill="url(#gEdge)"/><path d="M12 12c-5 6 0 16 9 15 3 0 5-1 7-3-4 6-9 6-13 6C7 28 6 16 12 12z" fill="#0c4f9a"/><path d="M17 12c-3 3-2 9 3 11 4 1 7 0 9-1l2-6c-2 3-6 4-9 3-3 0-5-1-4-3 1-1 1-3-1-4z" fill="#23272c"/><path d="M0 14c3-6 11-8 16-3-6 0-9 5-8 10 1 4 3 7 6 9C5 29 0 22 0 14z" fill="#1a86d8"/></svg></button>
    <button class="open" aria-label="Dosya Gezgini"><svg viewBox="0 0 30 30"><path d="M1 4h11l2 2h14v19H1z" fill="#e9a500"/><path d="M1 8h12l2-2h13v19H1z" fill="#ffd768"/><path d="M6 26V16h18v10h-5v-5h-8v5z" fill="#3b8ede"/></svg></button>
    <button aria-label="Posta"><svg viewBox="0 0 30 30"><path d="M0 11L15 1l15 10v18H0z" fill="#0d62b8"/><path d="M2 10h26v12H2z" fill="#f2f2f4"/><path d="M0 10l15 10v9H0z" fill="#2ba6ea"/><path d="M30 10L0 29h30z" fill="#38bdf2"/><path d="M30 29L15 19l15-9z" fill="#1b8fe0"/></svg></button>
    <button class="open" aria-label="Chrome"><svg viewBox="0 0 30 30"><circle cx="15" cy="15" r="15" fill="#34994f"/><path d="M2 7.500A15 15 0 0 1 28 7.500H15L8.500 18.700z" fill="#e33b2e"/><path d="M28 7.500A15 15 0 0 1 15 30l6.500-11.300L15 7.500z" fill="#fbc916"/><circle cx="15" cy="15" r="7.300" fill="#fff"/><circle cx="15" cy="15" r="5.800" fill="#3a7ced"/></svg></button>
    <button class="open" aria-label="Medya"><svg viewBox="0 0 30 30"><ellipse cx="14.500" cy="15.500" rx="14.500" ry="7" transform="rotate(-24 14.500 15.500)" fill="#1d7ef0"/><path d="M6 11C9 5 17 5 24 7l-10 3z" fill="#10151e"/><ellipse cx="16" cy="17" rx="9" ry="4" transform="rotate(-24 16 17)" fill="#bfe6ff"/><ellipse cx="17" cy="18" rx="6" ry="2.500" transform="rotate(-24 17 18)" fill="#fff"/></svg></button>
    <button class="open active" aria-label="SOLIDWORKS 2023"><svg viewBox="0 0 30 30"><path d="M1 6l13-5 15 4v16l-12 6L1 23z" fill="#7d0d12"/><path d="M1 6l13-5 15 4-14 5z" fill="#d8322f"/><path d="M1 6l14 4v17L1 23z" fill="#b3151b"/><path d="M11.500 11.500C7 9.500 4 13 6.500 15.500s4.500 4.500-3 4" fill="none" stroke="#fff" stroke-width="2.200"/><path d="M16.500 10.500l1.500 9.500 3-8 2 7 3-11" fill="none" stroke="#fff" stroke-width="2"/><rect x="11" y="21" width="19" height="8" rx="2" fill="#222"/><text x="12" y="28" class="year">2023</text></svg></button>
  </div>
  <button class="weather"><span class="cloud"><svg viewBox="0 0 30 20"><path d="M6 19a6 6 0 0 1-1-11 9 9 0 0 1 17-1 6 6 0 0 1 2 12z" fill="url(#gCloud)"/></svg><b>1</b></span><span>12°C</span><span>Bulutlu</span></button>
  <div class="tray">
    <button aria-label="Gizli simgeler"><svg viewBox="0 0 20 20"><path d="M2 14l8-8 8 8" fill="none" stroke="#fff" stroke-width="1.500"/></svg></button>
    <button aria-label="Kamera"><svg viewBox="0 0 20 20"><path d="M3 5.500h9v9H3zM12 9l4-2.500v7L12 11M5 2.500c3-2 6-2 9 0M5 17.500c3 2 6 2 9 0" fill="none" stroke="#fff" stroke-width="1.500"/></svg></button>
    <button aria-label="OneDrive"><svg viewBox="0 0 20 20"><path d="M4 11a5 5 0 0 1 9-5 5 5 0 0 1 3 4z" fill="#aaa"/><path d="M3 16a4 4 0 0 1 1-7c2-1 4-.5 6 1l7-.5a3.500 3.500 0 0 1 0 6.500z" fill="#fff"/></svg></button>
    <button aria-label="Pil"><svg viewBox="0 0 20 20"><path d="M4 6.500h14v8H4z" fill="none" stroke="#fff" stroke-width="1.300"/><path d="M6 8.500h10v4H6z" fill="#fff"/><path d="M19 9v3M1 4v2.500h4V4M3 6.500V11M1.500 2v2M4.500 2v2" stroke="#fff" fill="none" stroke-width="1.300"/></svg></button>
    <button aria-label="Ağ"><svg viewBox="0 0 20 20"><path d="M3 17C3 9 9 3 17 3M6.500 17c0-6 4.500-10.500 10.500-10.500M10 17c0-4 3-7 7-7" fill="none" stroke="#ddd" stroke-width="1.400"/><circle cx="15.500" cy="15.500" r="1.800" fill="#fff"/></svg></button>
    <button aria-label="Ses"><svg viewBox="0 0 20 20"><path d="M1 7.500h3L8 4v12l-4-3.500H1z" fill="none" stroke="#fff" stroke-width="1.300"/><path d="M10.500 7.500c1.500 1.500 1.500 3.500 0 5" stroke="#fff" fill="none" stroke-width="1.300"/><path d="M13 5.500c2.500 2.500 2.500 6.500 0 9M16 3.500c3.500 3.500 3.500 9.500 0 13" stroke="#888" fill="none" stroke-width="1.300"/></svg></button>
  </div>
  <button class="clock"><span>21:25</span><span>7.01.2024</span></button>
  <button class="notify" aria-label="Bildirimler"><svg viewBox="0 0 20 20"><path d="M0 1h20v14h-6v4l-4-4H0z" fill="#fff"/><path d="M3.500 4.500h13M3.500 8h13M3.500 11.500h9" stroke="#333" stroke-width="1.300"/></svg><b>1</b></button>
</footer>

<div class="toast" role="status">
  <svg class="info" viewBox="0 0 18 18"><circle cx="9" cy="9" r="8" fill="none" stroke="#999" stroke-width="1.200"/><path d="M9 8v6M9 4.500v2" stroke="#999" stroke-width="1.800"/></svg>
  <div class="toast-text"><strong>Eklenti yükleme performansı</strong><p>SOLIDWORKS başlatma performansını<br>etkileyebilecek eklentileriniz var.</p><button>Eklentileri Yönet</button></div>
</div>
</body>
</html>
```
FILE: styles.css
```css
* { box-sizing: border-box; }
html, body { height: 100%; }
body {
  margin: 0;
  display: flex;
  flex-direction: column;
  min-height: 100vh;
  overflow: hidden;
  position: relative;
  background: #f6f6f6;
  color: #111;
  font: 14px/20px "Open Sans", "Noto Sans", sans-serif;
}
button {
  margin: 0; padding: 0; border: 0; background: none;
  color: inherit; font: inherit;
  display: flex; align-items: center; justify-content: center;
  white-space: nowrap;
}
input { border: 0; background: none; outline: 0; padding: 0; font: inherit; min-width: 0; flex: 1; }
h1, h2, h3, p, ul { margin: 0; padding: 0; font: inherit; }
svg { display: block; flex: none; width: 20px; height: 20px; }
.sprite { position: absolute; width: 0; height: 0; }

/* title bar */
.titlebar { display: flex; flex: none; height: 41px; border-top: 1px solid #bcbcbc; border-bottom: 1px solid #777; background: #f7f7f7; }
.brand { display: flex; align-items: center; width: 138px; padding: 0 0 2px 5px; color: #da291c; }
.brand-mark { width: 21px; height: 25px; }
.brand-name { margin-left: 4px; font-size: 14px; font-style: italic; line-height: 20px; }
.menus { display: flex; align-items: center; width: 383px; padding: 2px 0 0 8px; gap: 16px; border-right: 1px solid #c4c4c4; font-size: 13px; }
.menus .pin { color: #888; margin: 0 0 2px -4px; }
.menus .pin svg { width: 15px; height: 15px; }
.quick { display: flex; align-items: center; padding-left: 22px; }
.ico { width: 24px; height: 32px; }
.home { margin-right: 8px; }
.splits { display: flex; gap: 3px; }
.split { display: flex; }
.caret { width: 18px; height: 32px; margin-left: 2px; color: #333; }
.caret svg { width: 8px; height: 8px; }
.tools .caret { margin-left: 0; }
.dim .caret { color: #999; }
.select-tool { display: flex; height: 33px; border: 1px solid #666; background: #fff; }
.select-tool .ico { width: 31px; height: 31px; background: #b0b0b0; border-right: 1px solid #666; }
.select-tool .caret { width: 14px; height: 31px; margin: 0; }
.tools { display: flex; gap: 9px; padding-left: 4px; }
.doc-title { flex: 1; text-align: center; font-size: 13px; line-height: 40px; }
.command-search { display: flex; align-items: center; width: 252px; height: 29px; margin: 5px 4px 0 0; padding: 0 4px 0 6px; border: 1px solid #bbb; background: #fff; font-size: 13px; }
.command-search input { margin-left: 7px; }
.command-search input::placeholder { color: #666; opacity: 1; }
.prompt { width: 19px; height: 19px; }
.mag { width: 18px; height: 18px; color: #888; }
.drop { width: 12px; height: 12px; margin-left: 4px; color: #777; }
.window-controls { display: flex; padding-right: 4px; color: #333; }
.window-controls button { width: 41px; }

/* document area */
.workspace { display: flex; flex: 1; min-height: 0; border-bottom: 1px solid #777; }
.document {
  display: flex; flex-direction: column; flex: 1; min-width: 0;
  border-right: 1px solid #777;
  background:
    radial-gradient(ellipse 50% 18% at 75% 76%, #ffffff 20%, #ffffff00 100%),
    linear-gradient(180deg, #ffffff00 52%, #fffffff0 69%, #ffffffe0 80%, #f7f8faf0 100%),
    radial-gradient(ellipse 66% 52% at 2% 2%, #ffffff 55%, #ffffff00 100%),
    radial-gradient(ellipse 30% 30% at 100% 0%, #f1f2f4 0%, #f1f2f400 100%),
    radial-gradient(ellipse 70% 70% at 77% 42%, #d9dce8 0%, #e1e4ed 50%, #e6e8f0 80%);
  background-size: calc(100% - 231px) 100%;
  background-position: right top;
  background-repeat: no-repeat;
}
.ribbon { display: flex; flex: none; justify-content: space-between; height: 27px; }
.ribbon-tabs {
  display: grid;
  grid-template-columns: 76px 56px 75px 85px 71px 107px 136px 88px 71px 136px 187px 57px 156px 189px;
  background: #d4d4d4; border-bottom: 1px solid #777; color: #222;
}
.ribbon-tabs button { border-right: 1px solid #777; }
.doc-controls { display: flex; align-items: center; gap: 10px; padding: 5px 11px 0 0; color: #999; }
.doc-controls svg { width: 16px; height: 16px; }
.doc-body { display: flex; flex: 1; min-height: 0; }

/* feature manager */
.manager { position: relative; display: flex; flex-direction: column; flex: none; width: 231px; background: #f6f6f6; border-right: 1px solid #777; }
.grip { display: flex; align-items: center; justify-content: center; flex: none; height: 27px; margin: 2px 2px 0 0; border-top: 1px solid #9fb4b8; border-bottom: 1px solid #bbb; box-shadow: inset 0 4px #f6f6f6, inset 0 5px #c4c4c4; }
.grip i, .flyout i { width: 6px; height: 6px; border: 1px solid #888; border-radius: 50%; background: #ccc; }
.manager-tabs { display: flex; flex: none; height: 27px; margin: 2px 2px 0 2px; border-bottom: 1px solid #777; }
.manager-tabs button { flex: none; width: 40px; border-top: 1px solid #777; border-right: 1px solid #777; background: #d4d4d4; }
.manager-tabs button.on { background: #f6f6f6; }
.manager-tabs button svg { width: 18px; height: 18px; }
.manager-tabs button.cropped { width: 21px; overflow: hidden; justify-content: flex-start; padding-left: 9px; border-right: 0; }
.manager-tabs button.step { flex: 1; margin-top: 2px; border: 1px solid #aaa; background: #f0f0f0; color: #000; }
.manager-tabs button.step svg { width: 8px; height: 8px; }
.filter { flex: none; height: 31px; margin: 0 5px; border: 1px solid #c4c4c4; padding: 6px 2px; }
.filter svg { width: 17px; height: 18px; }
.tree { flex: none; list-style: none; overflow: hidden; margin-right: 2px; font-size: 14px; color: #000; border-left: 1px solid #bbb; }
.tree li { display: flex; align-items: center; position: relative; height: 24px; padding-left: 26px; white-space: nowrap; }
.tree li.root { padding-left: 4px; }
.tree .t { width: 18px; height: 18px; }
.tree .w { width: 16px; height: 16px; margin: 0 -1px 0 7px; }
.tree span { margin-left: 5px; }
.tree .w + span { margin-left: 7px; }
.tree .root .w { margin-left: 6px; }
.tree .olive { color: #8a8a14; }
.tree .has::before { content: ""; position: absolute; left: 9px; top: 7px; border: 4px solid transparent; border-left-color: #555; border-right-width: 0; }
.rollback { flex: none; height: 4px; margin-right: 2px; background: #3a8fc6; }
.hscroll { display: flex; flex: none; height: 19px; margin: auto 2px 2px 1px; background: #efefef; }
.hscroll button { width: 21px; }
.hscroll svg { width: 11px; height: 11px; }
.track { flex: 1; display: flex; }
.track i { width: 56%; background: #cdcdcd; }
.base-line { flex: none; height: 3px; border-top: 1px solid #bbb; border-bottom: 1px solid #bbb; }
.flyout { position: absolute; left: 100%; top: 422px; width: 12px; height: 49px; background: #f6f6f6; border: 1px solid #777; border-left: 0; }

/* graphics area */
.canvas { position: relative; flex: 1; min-width: 0; }
.hud { position: absolute; left: 518px; top: 7px; display: flex; gap: 6px; }
.hud .more { margin-right: -4px; }
.hud .c { width: 8px; height: 8px; margin: 0 5px; color: #888; }
.plate { position: absolute; left: 27%; top: 300px; width: 560px; height: 270px; --floor: #66c8bf; }
.shade-a { --floor: #60c1b8; }
.shade-b { --floor: #4bada3; }
.shade-d { --floor: #36958b; }
.triad { position: absolute; left: 6px; bottom: 38px; width: 52px; height: 78px; font: 9px "Open Sans", sans-serif; }
.pane-tabs { position: absolute; right: 0; top: 31px; border: 1px solid #777; border-right: 0; border-bottom: 0; background: #d4d4d4; }
.pane-tabs button { width: 32px; height: 30px; border-bottom: 1px solid #777; }
.pane-tabs .on { height: 29px; background: #f6f6f6; }
.pane-tabs svg { width: 18px; height: 18px; }

/* sheet tabs */
.sheet-tabs { display: flex; flex: none; height: 20px; background: #f6f6f6; border-top: 1px solid #777; }
.steppers { display: flex; width: 82px; padding-left: 2px; background: #9fb4b8; }
.steppers button { flex: 1; background: #a5a8c0; border: 1px solid #8b8ea6; }
.steppers svg { width: 11px; height: 11px; fill: #8587a0; stroke: #8587a0; }
.sheet { background: #d4d4d4; border-right: 1px solid #777; font-size: 15px; }
.sheet.on { width: 77px; background: #f6f6f6; font-weight: 700; padding-left: 4px; }
.sheet.view { width: 114px; }
.sheet.motion { width: 149px; padding-right: 8px; }

/* resources pane */
.taskpane { flex: none; width: 300px; background: #f6f6f6; color: #444; font-size: 12px; }
.taskpane header { display: flex; align-items: center; height: 24px; padding-right: 1px; background: #a9abae; border-bottom: 1px solid #111; color: #000; }
.taskpane header h2 { flex: 1; text-align: center; font-size: 14px; font-weight: 700; padding-right: 10px; }
.taskpane header button { width: 20px; font-size: 20px; line-height: 20px; }
.taskpane header button:first-child { width: 32px; }
.taskpane header svg { width: 16px; height: 16px; }
.taskpane header svg.small { width: 14px; height: 14px; }
.taskpane a { display: flex; align-items: center; gap: 5px; height: 32px; padding-left: 1px; color: inherit; text-decoration: none; }
.taskpane a svg { width: 19px; height: 19px; margin-bottom: 4px; }
.taskpane .welcome { margin: 32px 0 27px 15px; }
.taskpane section { margin: 0 30px 28px 16px; border-top: 1px solid #777; }
.taskpane h3 { display: flex; align-items: center; justify-content: space-between; height: 25px; padding: 0 8px 0 3px; font-weight: 700; }
.taskpane h3 svg { width: 12px; height: 12px; }

/* status bar */
.statusbar { display: flex; flex: none; align-items: center; height: 21px; background: #f6f6f6; padding: 2px 3px 0 1px; color: #000; }
.statusbar .product { flex: 1; }
.mode { width: 226px; }
.units { width: 89px; justify-content: flex-start; }
.units svg { width: 8px; height: 8px; margin-left: 12px; }
.tag { width: 16px; height: 15px; }

/* operating system taskbar */
.taskbar {
  display: flex; flex: none; height: 50px; color: #fff;
  background: linear-gradient(90deg, #20251d 0%, #262b26 4%, #22262e 22%, #2c2d2a 25%, #34342a 30%, #262a2c 37%, #24272b 48%, #24282d 60%, #26323d 72%, #35303a 80%, #33302f 87%, #2f3533 93%, #363c38 100%);
}
.start { width: 60px; }
.os-search { display: flex; align-items: center; width: 360px; background: #f2f2f2; border: 1px solid #c4c4c4; border-bottom: 0; padding-left: 14px; }
.os-search input { margin-left: 15px; font-size: 17px; }
.os-search input::placeholder { color: #333; opacity: 1; }
.rocks { width: 100px; height: 47px; align-self: flex-end; }
.apps { display: flex; flex: 1; }
.apps button { width: 62px; border-bottom: 3px solid transparent; position: relative; }
.apps svg { width: 30px; height: 30px; }
.apps .view-tasks svg { width: 20px; height: 20px; }
.apps .open::after { content: ""; position: absolute; left: 6px; right: 5px; bottom: -3px; height: 3px; background: #76b9ed; }
.apps .active { background: #56575a; margin-left: 2px; width: 61px; }
.apps .active::after { left: 0; right: 0; }
.year { font: 700 8px "Open Sans", sans-serif; fill: #fff; }
.weather { gap: 11px; font-size: 16px; margin-right: 25px; }
.cloud { position: relative; }
.cloud svg { width: 31px; height: 21px; }
.cloud b { position: absolute; right: 0; top: -7px; width: 15px; height: 15px; border-radius: 50%; background: #c42b1c; font: 11px/15px "Open Sans", sans-serif; text-align: center; }
.tray { display: flex; }
.tray button { width: 30px; }
.clock { width: 84px; flex-direction: column; }
.clock span { line-height: 23px; }
.notify { position: relative; width: 63px; border-right: 1px solid #666; margin-right: 5px; padding: 0 9px 0 0; }
.notify b { position: absolute; left: 27px; top: 24px; width: 20px; height: 20px; border: 1px solid #aaa; border-radius: 50%; background: #333836; font: 13px/18px "Open Sans", sans-serif; text-align: center; }

/* fading notification over the window */
.toast { position: absolute; left: 779px; top: 43px; width: 363px; height: 117px; display: flex; gap: 12px; padding: 10px 28px 0 11px; border: 1px solid #9cc8e8; border-left: 5px solid #a5d2f0; background: #f6fbff66; color: #999; font-size: 12px; line-height: 17px; }
.toast .info { width: 18px; height: 18px; }
.toast-text { flex: 1; }
.toast strong { display: block; color: #888; }
.toast p { margin-top: 13px; }
.toast button { width: 136px; height: 31px; margin: 2px 0 0 auto; border: 1px solid #ccc; background: #f0f0f080; }
```
